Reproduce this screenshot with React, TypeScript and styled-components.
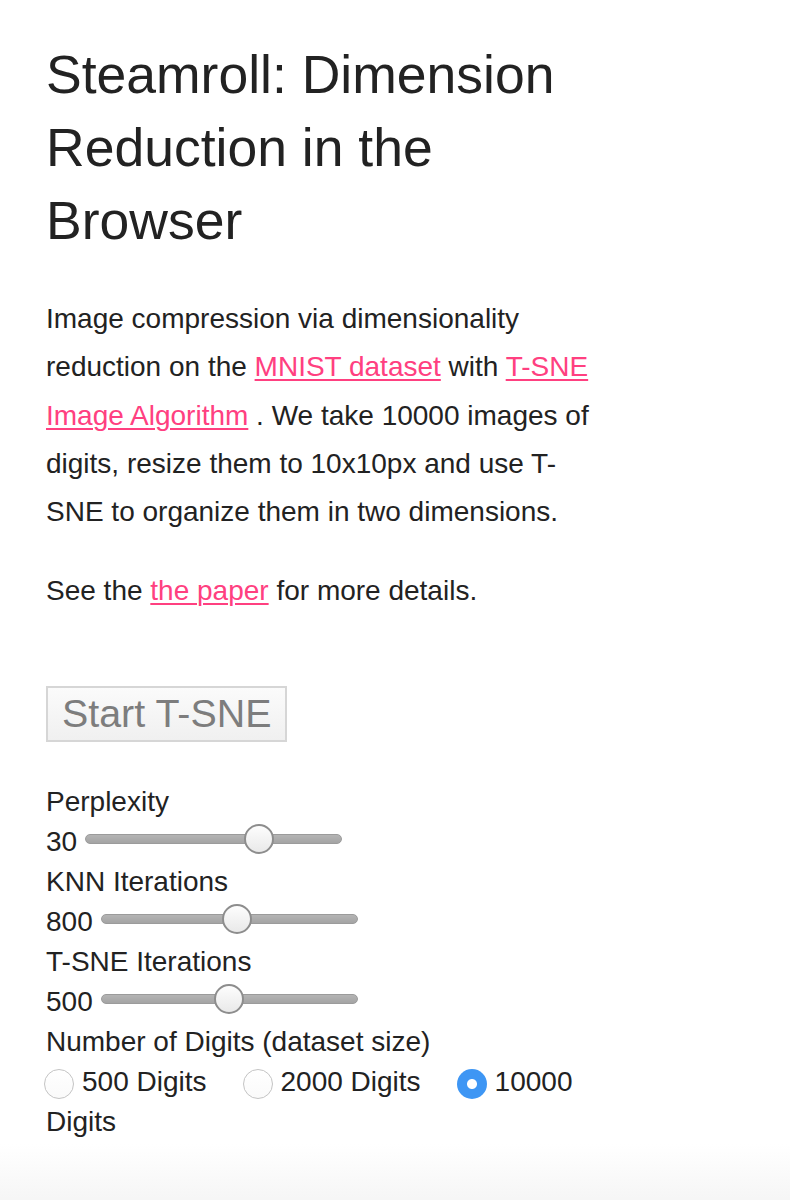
import React, { useState } from 'react';
import styled, { createGlobalStyle } from 'styled-components';

const GlobalStyle = createGlobalStyle`
  body {
    margin: 0;
    background: #fff;
    color: #222;
    font-family: "Liberation Sans", Arial, sans-serif;
  }
`;

const Page = styled.div`
  padding: 38px 46px 0;
  width: 560px;
`;

const Title = styled.h1`
  font-size: 53.5px;
  line-height: 73px;
  font-weight: 400;
  margin: 0 0 38px;
`;

const Paragraph = styled.p<{ $gap?: number }>`
  font-size: 28px;
  line-height: 48.3px;
  margin: 0 0 ${(p) => p.$gap ?? 0}px;
`;

const Link = styled.a`
  color: #ff4080;
  text-decoration: underline;
  text-decoration-thickness: 2px;
  text-underline-offset: 3px;
`;

const StartButton = styled.button`
  display: block;
  margin: 0 0 40px;
  height: 56px;
  padding: 0 14px;
  font-family: "Liberation Sans", Arial, sans-serif;
  font-size: 39.4px;
  color: #7d7d7d;
  background: linear-gradient(#fbfbfb, #f0f0f0);
  border: 2px solid #d6d6d6;
  border-radius: 0;
`;

const Controls = styled.div`
  font-size: 28px;
  line-height: 40px;
`;

const Label = styled.div`
  height: 40px;
`;

const SliderRow = styled.div`
  display: flex;
  align-items: center;
  height: 40px;
  gap: 8px;
`;

const Slider = styled.input`
  -webkit-appearance: none;
  appearance: none;
  width: 257px;
  height: 30px;
  margin: 0 0 6px;
  background: transparent;

  &::-webkit-slider-runnable-track {
    height: 10px;
    border-radius: 5px;
    background: linear-gradient(#b4b4b4, #a4a4a4);
    border: 1px solid #9b9b9b;
    box-sizing: border-box;
  }

  &::-webkit-slider-thumb {
    -webkit-appearance: none;
    width: 30px;
    height: 30px;
    margin-top: -11px;
    border-radius: 50%;
    border: 2px solid #8d8d8d;
    box-sizing: border-box;
    background: linear-gradient(#fdfdfd, #e9e9e9);
  }
`;

const RadioLine = styled.div`
  width: 560px;
`;

const RadioLabel = styled.label`
  margin-right: 38px;
`;

const Radio = styled.input`
  -webkit-appearance: none;
  appearance: none;
  width: 30px;
  height: 30px;
  margin: 1px 8px 0 -2px;
  vertical-align: middle;
  border-radius: 50%;
  border: 1px solid #c4c4c4;
  box-sizing: border-box;
  background: linear-gradient(#ffffff, #fafafa);

  &:checked {
    border: none;
    background: radial-gradient(circle, #ffffff 0 4.5px, #3e96f4 5.5px);
  }
`;

const Fade = styled.div`
  height: 60px;
  margin-top: 2px;
  background: linear-gradient(#ffffff, #f5f5f5);
`;

type SliderProps = { value: number; min: number; max: number };

const ValueSlider: React.FC<SliderProps> = ({ value, min, max }) => {
  const [v, setV] = useState(value);
  return (
    <SliderRow>
      <span>{v}</span>
      <Slider type="range" min={min} max={max} value={v} onChange={(e) => setV(Number(e.target.value))} />
    </SliderRow>
  );
};

const App: React.FC = () => {
  const [size, setSize] = useState('10000');
  const sizes = ['500', '2000', '10000'];
  return (
    <>
      <GlobalStyle />
      <Page>
        <Title>Steamroll: Dimension Reduction in the Browser</Title>
        <Paragraph $gap={31}>
          Image compression via dimensionality reduction on the <Link href="#">MNIST dataset</Link> with{' '}
          <Link href="#">T-SNE Image Algorithm</Link> . We take 10000 images of digits, resize them to 10x10px and use
          T-SNE to organize them in two dimensions.
        </Paragraph>
        <Paragraph $gap={70}>
          See the <Link href="#">the paper</Link> for more details.
        </Paragraph>
        <StartButton>Start T-SNE</StartButton>
        <Controls>
          <Label>Perplexity</Label>
          <ValueSlider value={30} min={2} max={42} />
          <Label>KNN Iterations</Label>
          <ValueSlider value={800} min={0} max={1500} />
          <Label>T-SNE Iterations</Label>
          <ValueSlider value={500} min={0} max={1000} />
          <Label>Number of Digits (dataset size)</Label>
          <RadioLine>
            {sizes.map((s) => (
              <RadioLabel key={s}>
                <Radio type="radio" name="size" checked={size === s} onChange={() => setSize(s)} />
                {s} Digits
              </RadioLabel>
            ))}
          </RadioLine>
        </Controls>
      </Page>
      <Fade />
    </>
  );
};

export default App;
